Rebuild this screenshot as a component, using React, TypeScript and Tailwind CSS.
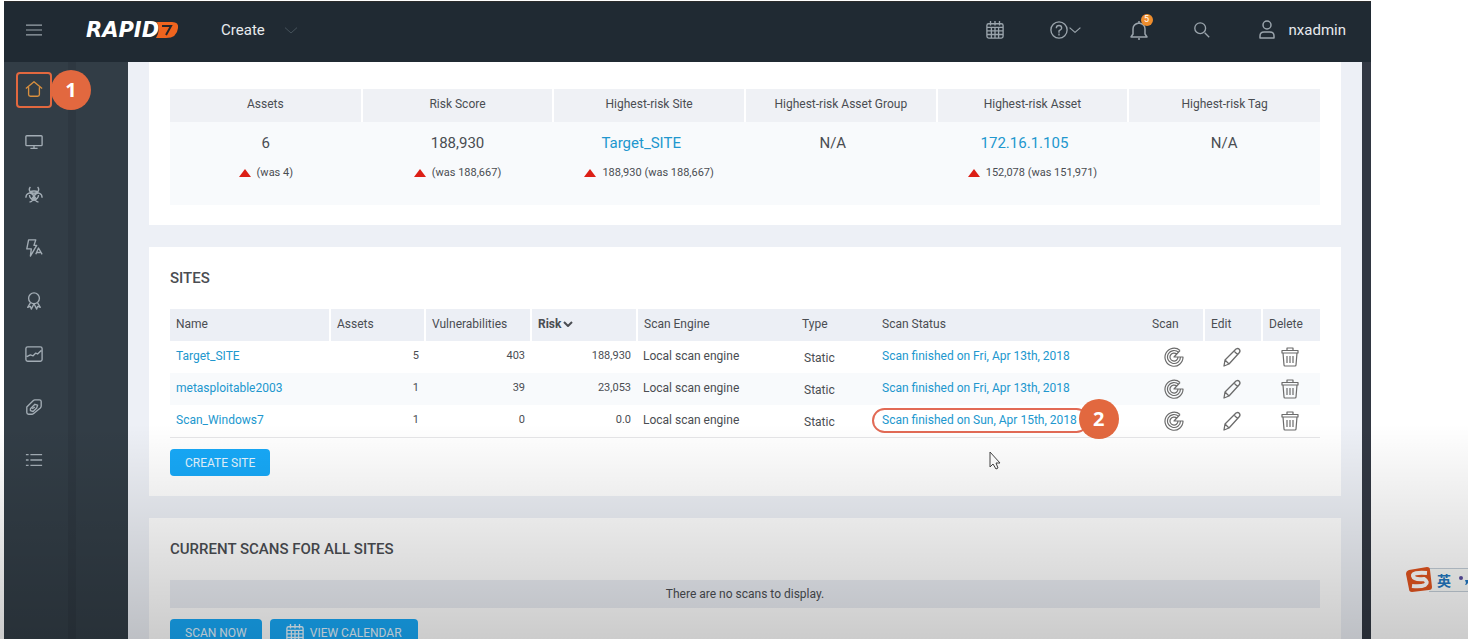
import clsx from "clsx";
import type { ReactNode } from "react";

type Site = {
  name: string;
  assets: string;
  vulnerabilities: string;
  risk: string;
  status: string;
};

const SUMMARY = [
  { label: "Assets", value: "6", change: "(was 4)", link: false, inset: false },
  { label: "Risk Score", value: "188,930", change: "(was 188,667)", link: false, inset: false },
  { label: "Highest-risk Site", value: "Target_SITE", change: "188,930 (was 188,667)", link: true, inset: true },
  { label: "Highest-risk Asset Group", value: "N/A", change: "", link: false, inset: true },
  { label: "Highest-risk Asset", value: "172.16.1.105", change: "152,078 (was 151,971)", link: true, inset: true },
  { label: "Highest-risk Tag", value: "N/A", change: "", link: false, inset: false },
];

const SITES: Site[] = [
  { name: "Target_SITE", assets: "5", vulnerabilities: "403", risk: "188,930", status: "Scan finished on Fri, Apr 13th, 2018" },
  { name: "metasploitable2003", assets: "1", vulnerabilities: "39", risk: "23,053", status: "Scan finished on Fri, Apr 13th, 2018" },
  { name: "Scan_Windows7", assets: "1", vulnerabilities: "0", risk: "0.0", status: "Scan finished on Sun, Apr 15th, 2018" },
];

const NAV_ITEMS: { label: string; icon: ReactNode }[] = [
  { label: "Home", icon: <path d="M1 9.500 10 2l9 7.500M4 8v8q0 2 2 2h8q2 0 2-2V8" /> },
  { label: "Assets", icon: <path d="M2 3h16q1 0 1 1v9q0 1-1 1H2q-1 0-1-1V4q0-1 1-1zM10 14v3M6 17h8" /> },
  {
    label: "Vulnerabilities",
    icon: (
      <>
        <path d="M6 1C3 4 6 8 10 8s7-4 4-7M1 13c0-5 5-7 8-3 2 3 0 7-4 8M19 13c0-5-5-7-8-3-2 3 0 7 4 8" />
        <path d="M5 7q5-3 10 0M5 10q0 4 5 6 5-2 5-6M10 8v3l-3 4M10 11l3 4" />
      </>
    ),
  },
  {
    label: "Policies",
    icon: (
      <>
        <path d="M4 1h8l-2 6h3L6 19l1-8H2z" />
        <path d="m12 17 3-7 4 7M13 15h4" />
      </>
    ),
  },
  {
    label: "Goals",
    icon: (
      <>
        <circle cx="10" cy="7" r="6" />
        <path d="m6 12-3 5 3-1 1 3 3-6 3 6 1-3 3 1-3-5" />
      </>
    ),
  },
  { label: "Reports", icon: <path d="M3 2h14q2 0 2 2v12q0 2-2 2H3q-2 0-2-2V4q0-2 2-2zM2 13l4-2 3 1 3-3 2 1 4-4" /> },
  {
    label: "Tickets",
    icon: (
      <>
        <path d="m2 10 7-7q1-1 2-1h5q2 0 2 2v5q0 1-1 2l-7 6q-1 1-2 1H4q-2 0-2-2z" />
        <path d="m6 12 5-5 3 1-1 3-4 4-3-1zM8 12l3-2" />
      </>
    ),
  },
  { label: "Administration", icon: <path d="M6 4h13M6 10h13M6 16h13M1 4h3M1 10h3M1 16h3" /> },
];

function Icon({ className, children }: { className?: string; children: ReactNode }) {
  return (
    <svg
      viewBox="0 0 20 20"
      className={clsx("shrink-0", className)}
      fill="none"
      stroke="currentColor"
      strokeWidth="1.5"
      strokeLinejoin="round"
      aria-hidden="true"
    >
      {children}
    </svg>
  );
}

function CalendarIcon({ className }: { className?: string }) {
  return (
    <Icon className={className}>
      <path d="M3 3h14q2 0 2 2v12q0 2-2 2H3q-2 0-2-2V5q0-2 2-2zM1 7h18M1 11h18M1 15h18M6 7v12M10 7v12M14 7v12M5 0v5M10 0v5M15 0v5" />
    </Icon>
  );
}

function Step({ n, className }: { n: number; className: string }) {
  return (
    <span
      className={clsx(
        "absolute flex h-10 w-10 items-center justify-center rounded-full bg-[#e2683f] font-['Open_Sans',sans-serif] text-xl font-bold text-white",
        className
      )}
    >
      {n}
    </span>
  );
}

function Logo() {
  return (
    <a href="#home" aria-label="Rapid7" className="flex h-5 items-center">
      <span className="font-['DejaVu_Sans',sans-serif] text-[21px] leading-5 font-bold italic text-white">RAPID</span>
      <svg viewBox="0 0 24 16" className="-ml-1 h-4 w-6" aria-hidden="true">
        <path d="M2 0h15q7 0 6 6-1 10-12 10H1q5-8 1-16z" fill="#f0641e" />
        <path d="M7 4h9l-5 9" fill="none" stroke="#26262a" strokeWidth="2" />
      </svg>
    </a>
  );
}

function TopBar() {
  return (
    <header className="flex h-[61px] shrink-0 items-center border-t border-[#2c2c2c] bg-[#202a33] pr-[25px] pb-1 pl-[22px] text-[15px] text-[#e8ebee]">
      <button aria-label="Menu" className="text-[#9aa4ac]">
        <Icon className="h-4 w-4">
          <path d="M0 4h20M0 10h20M0 16h20" />
        </Icon>
      </button>
      <div className="ml-11">
        <Logo />
      </div>
      <button className="ml-[42px] flex items-center gap-5">
        Create
        <Icon className="h-3 w-3 text-[#4b5760]">
          <path d="m0 6 10 9 10-9" />
        </Icon>
      </button>
      <div className="ml-auto flex items-center text-[#9aa4ac]">
        <button aria-label="Calendar">
          <CalendarIcon className="h-[18px] w-[18px]" />
        </button>
        <button aria-label="Help" className="ml-[46px] flex items-center gap-px">
          <Icon className="h-[18px] w-[18px]">
            <circle cx="10" cy="10" r="9" />
            <path d="M7 8q0-3 3-3t3 3q0 1-3 3v2M10 14v2" />
          </Icon>
          <Icon className="h-3 w-3">
            <path d="m1 6 9 8 9-8" strokeWidth="2" />
          </Icon>
        </button>
        <button aria-label="Notifications" className="relative ml-12">
          <Icon className="h-5 w-5">
            <path d="M2 17h16l-2-3V9q0-5-6-6-6 1-6 6v5zM10 1v2M9 19h2" />
          </Icon>
          <span className="absolute -top-1.5 left-3 flex h-3 w-3 items-center justify-center rounded-full bg-[#ee8d2d] text-[9px] text-white">
            5
          </span>
        </button>
        <button aria-label="Search" className="ml-11">
          <Icon className="h-[18px] w-[18px]">
            <circle cx="8" cy="8" r="6" />
            <path d="m13 13 5 5" />
          </Icon>
        </button>
        <button className="ml-[46px] flex items-center gap-3">
          <Icon className="h-5 w-5">
            <circle cx="10" cy="5" r="4" />
            <path d="M3 18v-2q0-4 4-4h6q4 0 4 4v2z" />
          </Icon>
          <span className="text-[#e8ebee]">nxadmin</span>
        </button>
      </div>
    </header>
  );
}

function SideBar() {
  return (
    <nav className="flex w-[124px] shrink-0 bg-[#323d46]">
      <ul className="w-[60px]">
        {NAV_ITEMS.map((item, i) => (
          <li key={item.label} className="relative flex h-[53px] items-center justify-center">
            <a href="#nav" aria-label={item.label} className={i === 0 ? "text-[#d9903f]" : "text-[#a3adb5]"}>
              <Icon className="h-[18px] w-[18px]">{item.icon}</Icon>
            </a>
            {i === 0 && (
              <>
                <span className="absolute top-2.5 left-3 h-9 w-9 rounded-sm border-2 border-[#e2683f]" />
                <Step n={1} className="top-2 left-[47px]" />
              </>
            )}
          </li>
        ))}
      </ul>
      <span className="ml-1 w-2 bg-[#2e3841]" />
    </nav>
  );
}

function Summary() {
  return (
    <section className="bg-white px-[21px] pt-[27px] pb-5">
      <table className="w-full table-fixed text-center">
        <thead>
          <tr className="h-[33px]">
            {SUMMARY.map((item) => (
              <th
                key={item.label}
                className="border-r-2 border-white bg-[#eff1f5] pb-1 text-xs font-normal last:border-r-0"
              >
                {item.label}
              </th>
            ))}
          </tr>
        </thead>
        <tbody>
          <tr className="h-[83px] bg-[#f8fafc] align-top">
            {SUMMARY.map((item) => (
              <td key={item.label} className="pt-[11px]">
                <div className={clsx("text-[15px] leading-5", item.inset && "pr-4")}>
                  {item.link ? (
                    <a href="#detail" className="text-[#2197ce]">
                      {item.value}
                    </a>
                  ) : (
                    item.value
                  )}
                </div>
                {item.change && (
                  <div className="mt-3 flex items-center justify-center gap-1.5 leading-4">
                    <svg viewBox="0 0 12 8" className="h-2 w-3" aria-hidden="true">
                      <path d="M0 8 6 0l6 8z" fill="#dc1f16" />
                    </svg>
                    {item.change}
                  </div>
                )}
              </td>
            ))}
          </tr>
        </tbody>
      </table>
    </section>
  );
}

function RowButton({ label, children }: { label: string; children: ReactNode }) {
  return (
    <button aria-label={label} className="mt-1.5 ml-3 block text-[#6b6b6b]">
      <Icon className="h-5 w-5">{children}</Icon>
    </button>
  );
}

function Sites() {
  const th = "border-r-2 border-white px-1.5 pb-0.5 last:border-r-0";
  const thPlain = "px-1.5 pb-0.5";

  return (
    <section className="bg-white px-[21px] pt-[21px] pb-5">
      <h2 className="text-[15px] leading-5 font-medium">SITES</h2>
      <table className="mt-[21px] w-full table-fixed border-b border-[#e6e6e8] text-left">
        <colgroup>
          <col className="w-[160px]" />
          <col className="w-[95px]" />
          <col className="w-[106px]" />
          <col className="w-[106px]" />
          <col className="w-[159px]" />
          <col className="w-20" />
          <col />
          <col className="w-[58px]" />
          <col className="w-[58px]" />
          <col className="w-[58px]" />
        </colgroup>
        <thead>
          <tr className="h-8 bg-[#eceff5] text-xs [&>th]:font-normal">
            <th className={th}>Name</th>
            <th className={th}>Assets</th>
            <th className={th}>Vulnerabilities</th>
            <th className={th}>
              <button className="flex items-center gap-0.5 font-bold">
                Risk
                <Icon className="h-2.5 w-2.5">
                  <path d="m2 6 8 8 8-8" strokeWidth="4" />
                </Icon>
              </button>
            </th>
            <th className={thPlain}>Scan Engine</th>
            <th className={thPlain}>Type</th>
            <th className={thPlain}>Scan Status</th>
            <th className={th}>Scan</th>
            <th className={th}>Edit</th>
            <th className={th}>Delete</th>
          </tr>
        </thead>
        <tbody>
          {SITES.map((site, i) => (
            <tr key={site.name} className="h-8 align-top even:bg-[#f8fafc] [&>td]:px-1.5 [&>td]:leading-[30px]">
              <td className="text-xs">
                <a href="#site" className="text-[#2197ce]">
                  {site.name}
                </a>
              </td>
              <td className="text-right">{site.assets}</td>
              <td className="text-right">{site.vulnerabilities}</td>
              <td className="text-right">{site.risk}</td>
              <td className="text-xs">Local scan engine</td>
              <td className="pt-0.5 text-xs">
                <span className="ml-0.5">Static</span>
              </td>
              <td className="text-xs">
                <span className="relative inline-block">
                  <a href="#scan" className="whitespace-nowrap text-[#2197ce]">
                    {site.status}
                  </a>
                  {i === 2 && (
                    <>
                      <span className="pointer-events-none absolute top-[3px] -right-3 -left-2.5 h-[25px] rounded-full border-2 border-[#e26a55]" />
                      <Step n={2} className="-top-1.5 -right-[42px]" />
                      <svg viewBox="0 0 12 19" className="absolute top-[46px] left-[107px] h-[19px] w-3" aria-hidden="true">
                        <path d="M1 1v15l3-3 3 5 2-1-2-5h4z" fill="#fff" stroke="#444" />
                      </svg>
                    </>
                  )}
                </span>
              </td>
              <td>
                <RowButton label={`Scan ${site.name}`}>
                  <path
                    d="M16 3.500A9 9 0 1 0 19 10h-9l6-6.500M14.600 5.400A6.500 6.500 0 1 0 16.500 10M12.800 7.200A4 4 0 1 0 14 10"
                    strokeWidth="1.200"
                  />
                </RowButton>
              </td>
              <td>
                <RowButton label={`Edit ${site.name}`}>
                  <path d="m2 19 1-6L14 2q2-1 3 0 2 2 0 4L7 17zM3 13l4 4M12 4l4 4" strokeWidth="1.300" />
                </RowButton>
              </td>
              <td>
                <RowButton label={`Delete ${site.name}`}>
                  <path
                    d="M2 3.500h16V6H2zM7 3.500V1h6v2.500M3 6l1 12q0 1 1 1h10q1 0 1-1l1-12M7 9v7M10 9v7M13 9v7"
                    strokeWidth="1.200"
                  />
                </RowButton>
              </td>
            </tr>
          ))}
        </tbody>
      </table>
      <button className="mt-[11px] block h-[27px] rounded-sm bg-[#17a9f8] px-[15px] text-xs text-[#e4f5ff]">
        CREATE SITE
      </button>
    </section>
  );
}

function CurrentScans() {
  return (
    <section className="flex-1 bg-white px-[21px] pt-[21px]">
      <h2 className="text-[15px] leading-5 font-medium">CURRENT SCANS FOR ALL SITES</h2>
      <p className="mt-[21px] bg-[#ebeef4] text-center text-xs leading-[28px]">There are no scans to display.</p>
      <div className="mt-[11px] flex gap-2 text-xs text-[#e4f5ff]">
        <button className="h-[27px] rounded-sm bg-[#17a9f8] px-[15px]">SCAN NOW</button>
        <button className="flex h-[27px] items-center gap-1.5 rounded-sm bg-[#17a9f8] px-4">
          <CalendarIcon className="h-[18px] w-[18px]" />
          VIEW CALENDAR
        </button>
      </div>
    </section>
  );
}

function InputToolbar() {
  return (
    <div className="absolute right-0 bottom-[45px] flex items-center">
      <svg viewBox="0 0 28 28" className="relative h-7 w-7" aria-hidden="true">
        <path d="m4 4 18-3q3 0 3 3l2 17q0 3-3 3L7 26q-3 0-3-3L1 8q0-3 3-4z" fill="#e2541f" />
        <path d="M22 7Q7 6 8 10t11 3q5 3 1 6-4 2-13 1" fill="none" stroke="#fff" strokeWidth="4" />
      </svg>
      <div className="-ml-1 flex h-6 items-center gap-2 border-y border-[#c3ced8] bg-[#fafcfa] pl-2 font-['Noto_Sans_CJK_SC',sans-serif] text-sm font-bold text-[#2277c0]">
        英
        <svg viewBox="0 0 9 12" className="h-3 w-[9px]" aria-hidden="true">
          <circle cx="2" cy="4" r="2" fill="#5a4fa0" />
          <path d="M6 6h3v3q-1 2-3 2l1-2z" fill="#2277c0" />
        </svg>
      </div>
    </div>
  );
}

export default function App() {
  return (
    <div className="relative flex h-screen overflow-hidden bg-white pt-px pr-[97px] pl-1 font-[Roboto,sans-serif] text-[11px] text-[#4a4d52]">
      <div className="flex min-w-0 flex-1 flex-col">
        <TopBar />
        <div className="flex min-h-0 flex-1">
          <SideBar />
          <main className="flex min-w-0 flex-1 flex-col gap-[22px] overflow-hidden bg-[#edf0f6] px-[21px]">
            <Summary />
            <Sites />
            <CurrentScans />
          </main>
          <div className="w-[9px] shrink-0 bg-[#323843]" />
        </div>
      </div>
      <InputToolbar />
      <div className="pointer-events-none absolute inset-x-0 bottom-0 h-[215px] bg-linear-to-b from-transparent to-black/20" />
    </div>
  );
}
